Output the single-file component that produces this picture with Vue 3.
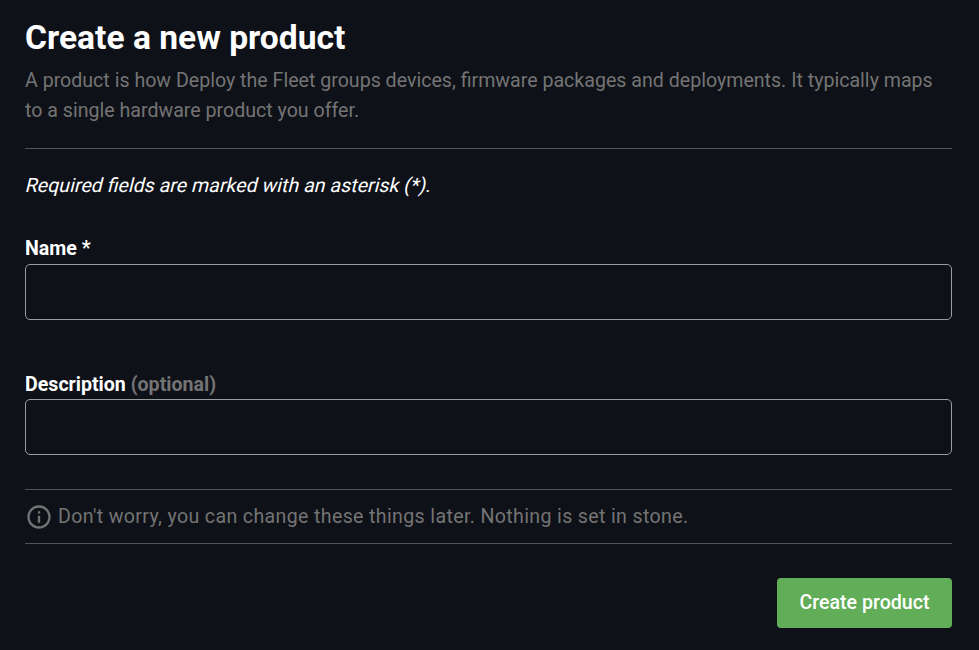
<template>
  <main class="page">
    <header class="heading">
      <h1>Create a new product</h1>
      <p>
        A product is how Deploy the Fleet groups devices, firmware packages and deployments. It typically maps
        to a single hardware product you offer.
      </p>
    </header>

    <form @submit.prevent>
      <p class="required-note">Required fields are marked with an asterisk (*).</p>

      <div v-for="field in fields" :key="field.id" class="field">
        <label :for="field.id">{{ field.label }} <span v-if="field.optional" class="optional">(optional)</span></label>
        <input :id="field.id" v-model="field.value" type="text" autocomplete="off" />
      </div>

      <div class="info">
        <svg width="28" height="28" viewBox="0 0 24 24" fill="currentColor">
          <path d="M11 7h2v2h-2zm0 4h2v6h-2zm1-9C6.48 2 2 6.48 2 12s4.48 10 10 10 10-4.48 10-10S17.52 2 12 2zm0 18c-4.41 0-8-3.59-8-8s3.59-8 8-8 8 3.59 8 8-3.59 8-8 8z" />
        </svg>
        <span>Don't worry, you can change these things later. Nothing is set in stone.</span>
      </div>

      <div class="actions">
        <button type="submit">Create product</button>
      </div>
    </form>
  </main>
</template>

<script setup>
import { reactive } from "vue";

const fields = reactive([
  { id: "name", label: "Name *", value: "", optional: false },
  { id: "description", label: "Description", value: "", optional: true },
]);
</script>

<style>
body {
  margin: 0;
  background: #0e1118;
}
</style>

<style scoped>
.page {
  box-sizing: border-box;
  min-height: 650px;
  padding: 15px 27px 22px 25px;
  color: #fff;
  font-family: Roboto, sans-serif;
  font-size: 19.6px;
  line-height: 30px;
}

.heading {
  padding-bottom: 22px;
  border-bottom: 1px solid #525457;
}

h1 {
  margin: 0 0 6px;
  font-size: 33.6px;
  font-weight: 700;
  line-height: 45px;
}

p {
  margin: 0;
}

.heading p {
  color: #747474;
}

/* slanted upright face, a little wider than the true italic */
.required-note {
  margin: 22px 0 33px;
  padding-left: 1px;
  transform: skewX(-14deg);
}

.field {
  display: flex;
  flex-direction: column;
  margin-bottom: 49px;
}

.field + .field {
  margin-bottom: 34px;
}

.field + .field label {
  padding-top: 1px;
  margin-bottom: -1px;
}

label {
  font-weight: 700;
}

.optional {
  color: #747474;
}

input {
  box-sizing: border-box;
  width: 100%;
  height: 56px;
  padding: 0 16px;
  border: 1px solid #9b9d9f;
  border-radius: 5px;
  outline: none;
  background: transparent;
  color: inherit;
  font: inherit;
}

.info {
  display: flex;
  align-items: center;
  gap: 5px;
  box-sizing: border-box;
  height: 55px;
  border: solid #525457;
  border-width: 1px 0;
  color: #747474;
  letter-spacing: 0.35px;
}

.actions {
  display: flex;
  justify-content: flex-end;
  margin-top: 34px;
}

button {
  width: 175px;
  height: 50px;
  padding: 0 0 1px;
  border: 0;
  border-radius: 4px;
  background: #62ae58;
  color: #fff;
  font: 500 19.6px Roboto, sans-serif;
}
</style>
